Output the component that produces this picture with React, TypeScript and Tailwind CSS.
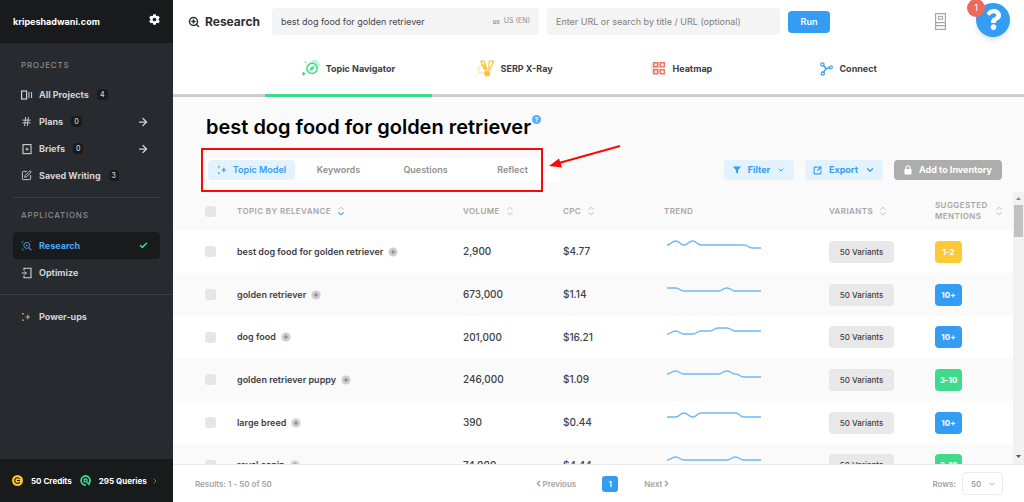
import React, { useState } from "react";
import { FaQuestion } from "react-icons/fa";
import {
  ArrowRight,
  Check,
  ChevronDown,
  ChevronLeft,
  ChevronRight,
  Hash,
  SquareArrowOutUpRight,
  SquarePen,
  ZoomIn,
} from "lucide-react";
import { IoMdSettings } from "react-icons/io";

type Topic = {
  name: string;
  volume: string;
  cpc: string;
  trend: number[];
  mentions: string;
  color: string;
};

const topics: Topic[] = [
  {
    name: "best dog food for golden retriever",
    volume: "2,900",
    cpc: "$4.77",
    trend: [6, 2, 6, 2, 6, 6, 6, 6, 6, 6, 9, 9],
    mentions: "1-2",
    color: "bg-[#fdca35]",
  },
  {
    name: "golden retriever",
    volume: "673,000",
    cpc: "$1.14",
    trend: [6, 6, 9, 9, 9, 9, 9, 6, 9, 9, 9, 9],
    mentions: "10+",
    color: "bg-[#349df3]",
  },
  {
    name: "dog food",
    volume: "201,000",
    cpc: "$16.21",
    trend: [10, 7, 10, 10, 7, 7, 4, 4, 7, 7, 7, 7],
    mentions: "10+",
    color: "bg-[#349df3]",
  },
  {
    name: "golden retriever puppy",
    volume: "246,000",
    cpc: "$1.09",
    trend: [7, 4, 7, 7, 7, 7, 7, 4, 7, 10, 10, 10],
    mentions: "3-10",
    color: "bg-[#3fdb8b]",
  },
  {
    name: "large breed",
    volume: "390",
    cpc: "$0.44",
    trend: [7, 7, 3, 7, 3, 3, 3, 3, 3, 7, 7, 7],
    mentions: "10+",
    color: "bg-[#349df3]",
  },
  {
    name: "royal canin",
    volume: "74,000",
    cpc: "$4.44",
    trend: [8, 5, 8, 8, 8, 8, 8, 8, 5, 8, 8, 8],
    mentions: "3-10",
    color: "bg-[#3fdb8b]",
  },
];

const ProjectsIcon = () => (
  <svg width="12" height="12" viewBox="0 0 12 12" fill="none" stroke="currentColor">
    <rect x="0.6" y="2" width="5" height="8" strokeWidth="1.2" />
    <path d="M8 3v6M10.6 3v6" strokeWidth="1" />
  </svg>
);

const BriefIcon = () => (
  <svg width="12" height="12" viewBox="0 0 12 12" fill="none" stroke="currentColor">
    <rect x="2" y="1.6" width="8" height="9" strokeWidth="1.1" />
    <path d="M6 4.6v3M4.5 6.1h3" strokeWidth="1" />
  </svg>
);

const OptimizeIcon = () => (
  <svg width="12" height="12" viewBox="0 0 12 12" fill="none" stroke="currentColor">
    <path d="M3 3.6V1.2h7v9.6H3V8.4" strokeWidth="1.1" />
    <path d="M0.8 6h4.4M3.8 4.4 5.4 6 3.8 7.6" strokeWidth="1" />
  </svg>
);

const ResearchIcon = () => (
  <svg width="12" height="12" viewBox="0 0 12 12" fill="none" stroke="#4d8fd1">
    <circle cx="5.8" cy="5.4" r="3" strokeWidth="1" />
    <circle cx="5.8" cy="5.4" r="0.9" fill="#4d8fd1" stroke="none" />
    <path d="m8 7.8 2.4 2.6" strokeWidth="1.1" />
    <path d="M1.4 3.4V1.4h1.4M1.4 8v2.2h2M9 1.6h1.2" strokeWidth="0.8" opacity="0.7" />
  </svg>
);

const SparkIcon = ({ className }: { className?: string }) => (
  <svg
    width="10"
    height="10"
    viewBox="0 0 10 10"
    className={className}
    fill="none"
    stroke="currentColor"
  >
    <path d="M6.8 2.8v4.4M4.6 5H9" strokeWidth="1.2" />
    <path d="M1.9 1v1.6M1.1 1.8h1.6M1.9 7.4V9M1.1 8.2h1.6" strokeWidth="1" />
  </svg>
);

const NavigatorIcon = () => (
  <svg width="18" height="17" viewBox="0 0 18 17" fill="none">
    <circle cx="12.6" cy="5" r="4.4" fill="#c9f5df" stroke="#6be3a7" strokeDasharray="1 1" />
    <circle cx="10" cy="8.4" r="5.1" fill="#e9fbf2" stroke="#3fdb8b" strokeWidth="1.5" />
    <path d="m12.6 5.8-1.5 3.7-3.7 1.6 1.5-3.8z" fill="#3fdb8b" />
    <path d="M1.6 12v3.6M0 13.8h3.4" stroke="#3fdb8b" strokeWidth="1.4" />
    <path d="M3.4 1v2M2.4 2h2" stroke="#8aebbb" strokeWidth="0.9" />
  </svg>
);

const XRayIcon = () => (
  <svg width="17" height="17" viewBox="0 0 17 17" fill="none">
    <circle cx="4.4" cy="9.4" r="3.8" stroke="#fbdc83" strokeWidth="2" strokeDasharray="1 1" />
    <path
      d="M2.6 1.2h3.2l3.4 8M6 1.2 7.4 10M2.6 1.2 7 10.4M11 1.2h4.6l-4 9M11 1.2v6l-1 3"
      stroke="#fcc52e"
      strokeWidth="1.2"
    />
    <circle cx="9.2" cy="13.4" r="3" fill="#fcc52e" />
  </svg>
);

const HeatmapIcon = () => (
  <svg width="15" height="15" viewBox="0 0 15 15" fill="none">
    <path d="M0 2h9v10H0z" fill="#fbe3dc" />
    <path
      d="M2.7 1.7h4v4h-4zM9.3 1.7h4v4h-4zM2.7 8.7h4v4h-4zM9.3 8.7h4v4h-4z"
      stroke="#ec7261"
      strokeWidth="1.5"
    />
  </svg>
);

const ConnectIcon = () => (
  <svg width="13" height="14" viewBox="0 0 13 14" fill="none" stroke="#41a3f4">
    <circle cx="2.4" cy="2.4" r="1.6" strokeWidth="1.3" />
    <circle cx="2.8" cy="11.6" r="1.6" strokeWidth="1.3" />
    <circle cx="10.8" cy="5.4" r="1.5" strokeWidth="1.3" />
    <path d="m3.6 3.6 2.6 3.2 3-1M6.2 6.8l-2.8 3.4" strokeWidth="1.6" />
  </svg>
);

const DocsIcon = () => (
  <svg width="11" height="17" viewBox="0 0 11 17" fill="none" stroke="#a9a5a3">
    <rect x="0.6" y="0.6" width="9.8" height="15.8" strokeWidth="1.2" />
    <rect x="3.4" y="3.4" width="4.2" height="2.8" strokeWidth="1.1" />
    <path d="M0.6 9.6h9.8M0.6 12.6h9.8" strokeWidth="1.2" />
  </svg>
);

const LockIcon = () => (
  <svg width="8" height="10" viewBox="0 0 8 10" fill="none">
    <rect x="0.4" y="4" width="7.2" height="5.4" rx="0.8" fill="currentColor" />
    <path d="M2 4.4V2.8a2 2 0 0 1 4 0v1.6" stroke="currentColor" strokeWidth="1.2" />
  </svg>
);

const CreditsIcon = () => (
  <svg width="11" height="11" viewBox="0 0 11 11" fill="none">
    <circle cx="5.5" cy="5.5" r="5.5" fill="#fcc52e" />
    <path d="M7.8 3.8a2.8 2.8 0 1 0 0 3.4M5 5.5h3" stroke="#181a1b" strokeWidth="1.1" />
  </svg>
);

const QueriesIcon = () => (
  <svg width="11" height="11" viewBox="0 0 12 12" fill="none" stroke="#3fdb8b">
    <path d="M9.6 9.4A4.9 4.9 0 1 0 6.4 10.9" strokeWidth="1.9" />
    <circle cx="6" cy="6" r="1.7" strokeWidth="1.5" />
    <path d="m7.6 7.8 2.8 3" strokeWidth="1.6" />
  </svg>
);

const SortIcon = ({ active = false }: { active?: boolean }) => (
  <svg width="8" height="10" viewBox="0 0 8 10" fill="none" strokeWidth="1.1">
    <path d="M1.4 3.6 4 1.2l2.6 2.4" stroke="#d0d0d0" />
    <path d="M1.4 6.4 4 8.8l2.6-2.4" stroke={active ? "#349df3" : "#d0d0d0"} />
  </svg>
);

const TrendLine = ({ values }: { values: number[] }) => {
  const step = 94 / (values.length - 1);
  const path = values.reduce((d, y, i) => {
    const x = i * step + 1;
    if (i === 0) return `M${x} ${y}`;
    const mid = x - step / 2;
    return `${d}C${mid} ${values[i - 1]} ${mid} ${y} ${x} ${y}`;
  }, "");

  return (
    <svg width="98" height="26" viewBox="-2 0 98 26" className="block" fill="none">
      <path d={path} stroke="#6db9f8" strokeWidth="1.5" />
    </svg>
  );
};

const NavItem = ({
  icon,
  label,
  count,
  arrow,
  active,
}: {
  icon: React.ReactNode;
  label: string;
  count?: number;
  arrow?: boolean;
  active?: boolean;
}) => (
  <a
    href="#"
    className={`flex h-[27px] items-center rounded px-2 text-[9px] font-bold ${
      active ? "bg-[#181a1b] text-[#4aa8f7]" : "text-[#d2d3d4]"
    }`}
  >
    <span className="flex w-[18px] shrink-0 items-center">{icon}</span>
    {label}
    {count !== undefined && (
      <span className="ml-2 rounded-sm bg-[#181a1b] px-[3px] text-[7px] leading-[11px] font-medium">
        {count}
      </span>
    )}
    {arrow && <ArrowRight size={12} strokeWidth={2.5} className="mr-[3px] ml-auto" />}
    {active && (
      <Check size={9} strokeWidth={4} className="mr-1 ml-auto text-[#3fdb8b]" />
    )}
  </a>
);

const Sidebar = () => (
  <aside className="flex w-[173px] shrink-0 flex-col bg-[#272a2e]">
    <div className="flex h-[43px] shrink-0 items-center justify-between bg-[#181a1b] pr-3 pl-[13px] text-[9px] font-bold text-white">
      kripeshadwani.com
      <button aria-label="Settings" className="mb-1">
        <IoMdSettings size={13} />
      </button>
    </div>
    <nav className="flex-1">
      <div className="px-[13px] pt-4">
        <h2 className="mb-[10px] px-2 text-[8px] leading-3 font-medium tracking-widest text-[#8b8d90]">
          PROJECTS
        </h2>
        <NavItem icon={<ProjectsIcon />} label="All Projects" count={4} />
        <NavItem icon={<Hash size={11} />} label="Plans" count={0} arrow />
        <NavItem icon={<BriefIcon />} label="Briefs" count={0} arrow />
        <NavItem icon={<SquarePen size={11} />} label="Saved Writing" count={3} />
        <hr className="mt-2 border-[#3b3e43]" />
        <h2 className="mt-[11px] mb-[11px] px-2 text-[8px] leading-3 font-medium tracking-widest text-[#8b8d90]">
          APPLICATIONS
        </h2>
        <NavItem icon={<ResearchIcon />} label="Research" active />
        <NavItem icon={<OptimizeIcon />} label="Optimize" />
      </div>
      <hr className="mt-2 mb-2 border-[#3b3e43]" />
      <div className="px-[13px]">
        <NavItem icon={<SparkIcon className="text-[#d3a57c]" />} label="Power-ups" />
      </div>
    </nav>
    <button className="flex h-[43px] shrink-0 items-center gap-2 bg-[#181a1b] px-3 text-[8px] font-bold whitespace-nowrap text-white">
      <CreditsIcon />
      50 Credits
      <QueriesIcon />
      295 Queries
      <ChevronRight size={8} className="-ml-1 text-[#a5a5a5]" />
    </button>
  </aside>
);

const Topbar = () => (
  <header className="flex h-[43px] shrink-0 items-center gap-2 bg-white pl-[15px]">
    <h1 className="mr-1 flex w-[72px] items-center gap-[5px] text-xs font-bold text-[#2b2e33]">
      <ZoomIn size={12} strokeWidth={3} className="shrink-0" />
      Research
    </h1>
    <div className="flex h-[27px] w-[267px] items-center rounded-sm bg-[#f4f4f4] px-[9px] text-[#8f8f8f]">
      <input
        aria-label="Keyword"
        defaultValue="best dog food for golden retriever"
        className="min-w-0 flex-1 text-[9px] text-[#45484c] outline-none"
      />
      <span className="text-[6px] font-semibold">us</span>
      <span className="ml-1 text-[7px]">US (EN)</span>
    </div>
    <input
      aria-label="URL"
      placeholder="Enter URL or search by title / URL (optional)"
      className="h-[27px] w-[233px] rounded-sm bg-[#f4f4f4] px-[9px] text-[9px] outline-none placeholder:text-[#808080]"
    />
    <button className="h-[22px] w-[42px] rounded-sm bg-[#349df3] text-[9px] font-semibold text-white">
      Run
    </button>
    <div className="ml-auto flex items-center gap-[30px] pr-[14px]">
      <button aria-label="Docs">
        <DocsIcon />
      </button>
      <button
        aria-label="Help"
        className="relative mb-1 flex h-[34px] w-[34px] items-center justify-center rounded-full bg-[#349df3] text-white shadow-md"
      >
        <FaQuestion size={21} />
        <span className="absolute -top-1 -left-[9px] h-[18px] w-[18px] rounded-full bg-[#ec6a5c] text-[9px] leading-[18px]">
          1
        </span>
      </button>
    </div>
  </header>
);

const views = [
  { label: "Topic Navigator", icon: <NavigatorIcon /> },
  { label: "SERP X-Ray", icon: <XRayIcon /> },
  { label: "Heatmap", icon: <HeatmapIcon /> },
  { label: "Connect", icon: <ConnectIcon /> },
];

const ViewTabs = () => (
  <div className="grid h-[54px] shrink-0 grid-cols-4 border-b-3 border-[#cecece] bg-white px-[92px]">
    {views.map((view, i) => (
      <button
        key={view.label}
        className={`-mb-[3px] flex items-center justify-center gap-[6px] border-b-3 text-[9px] font-bold text-[#3d4045] ${
          i === 0 ? "border-[#3fdb8b]" : "border-transparent"
        }`}
      >
        {view.icon}
        {view.label}
      </button>
    ))}
  </div>
);

const models = ["Topic Model", "Keywords", "Questions", "Reflect"];

const Toolbar = () => {
  const [selected, setSelected] = useState("Topic Model");

  return (
    <div className="flex items-center gap-[11px] pr-[22px] pl-[33px]">
      <div className="relative mr-auto flex rounded bg-white p-[2px] pr-1">
        {models.map((model) => (
          <button
            key={model}
            onClick={() => setSelected(model)}
            className={`flex h-5 w-[87px] items-center justify-center gap-[6px] rounded text-[9px] font-semibold ${
              selected === model
                ? "bg-[#e2f2ff] text-[#349df3]"
                : "text-[#8f8f8f]"
            }`}
          >
            {model === "Topic Model" && <SparkIcon />}
            {model}
          </button>
        ))}
        <div className="pointer-events-none absolute -top-[10px] right-[17px] -bottom-[10px] -left-[5px] border-2 border-[#fb0808]" />
        <svg
          width="76"
          height="30"
          viewBox="0 0 76 30"
          className="pointer-events-none absolute -top-[14px] left-full -ml-[13px]"
        >
          <path d="M73 2 12 19" stroke="#fb0808" strokeWidth="2" />
          <path d="M2 22 12 14.4 15 23.4z" fill="#fb0808" />
        </svg>
      </div>
      <button className="flex h-5 w-[70px] items-center justify-center gap-[7px] rounded bg-[#e2f2ff] text-[9px] font-bold text-[#349df3]">
        <svg width="8" height="8" viewBox="0 0 8 8" fill="currentColor">
          <path d="M0 0.4h8L5 4.2v3.4L3 6.6V4.2z" />
        </svg>
        Filter
        <ChevronDown size={8} strokeWidth={3} />
      </button>
      <button className="flex h-5 w-[78px] items-center justify-center gap-[7px] rounded bg-[#e2f2ff] text-[9px] font-bold text-[#349df3]">
        <SquareArrowOutUpRight size={9} strokeWidth={3} />
        Export
        <ChevronDown size={10} strokeWidth={3} />
      </button>
      <button className="flex h-5 w-[108px] items-center justify-center gap-[7px] rounded bg-[#adadad] text-[9px] font-bold text-white">
        <LockIcon />
        Add to Inventory
      </button>
    </div>
  );
};

const Tick = ({ label }: { label: string }) => (
  <input
    type="checkbox"
    aria-label={label}
    className="block h-[11px] w-[11px] appearance-none rounded-[3px] bg-[#e6e6e6] checked:bg-[#349df3]"
  />
);

const columns = [
  { label: "TOPIC BY RELEVANCE", width: "", sort: true },
  { label: "VOLUME", width: "w-[100px]", sort: true },
  { label: "CPC", width: "w-[101px]", sort: true },
  { label: "TREND", width: "w-[165px]", sort: false },
  { label: "VARIANTS", width: "w-[106px]", sort: true },
  { label: "SUGGESTED MENTIONS", width: "w-[78px] pr-[10px]", sort: true },
];

const TopicTable = () => (
  <table className="w-full table-fixed border-collapse text-left text-[10px] font-medium text-[#3d4045]">
    <thead>
      <tr className="h-[38px] text-[8px] leading-[11px] tracking-wider text-[#a6a6a6]">
        <th className="w-16 pl-8">
          <Tick label="Select all topics" />
        </th>
        {columns.map((column, i) => (
          <th key={column.label} className={`font-semibold ${column.width}`}>
            <span className="flex items-center gap-[6px]">
              {column.label}
              {column.sort && (
                <span className="shrink-0">
                  <SortIcon active={i === 0} />
                </span>
              )}
            </span>
          </th>
        ))}
      </tr>
    </thead>
    <tbody>
      {topics.map((topic) => (
        <tr
          key={topic.name}
          className="h-[43px] odd:bg-white even:bg-[#fafafa] nth-[3n]:h-[42px]"
        >
          <td className="pl-8">
            <Tick label={topic.name} />
          </td>
          <td className="text-[9px] font-semibold">
            <span className="flex items-center gap-[5px]">
              {topic.name}
              <button aria-label={`Add ${topic.name}`}>
                <svg width="10" height="10" viewBox="0 0 10 10" className="block">
                  <circle cx="5" cy="5" r="4.6" fill="#d0d0d0" />
                  <path d="M5 2.8v4.4M2.8 5h4.4" stroke="#7d7d7d" />
                </svg>
              </button>
            </span>
          </td>
          <td>{topic.volume}</td>
          <td>{topic.cpc}</td>
          <td>
            <TrendLine values={topic.trend} />
          </td>
          <td>
            <button className="block h-[22px] w-[65px] rounded bg-[#e8e8e8] text-[8px]">
              50 Variants
            </button>
          </td>
          <td>
            <span
              className={`block h-[22px] w-[27px] rounded text-center text-[8px] leading-[22px] font-bold text-white ${topic.color}`}
            >
              {topic.mentions}
            </span>
          </td>
        </tr>
      ))}
    </tbody>
  </table>
);

const Scrollbar = () => (
  <div className="flex w-[11px] shrink-0 flex-col items-center justify-between bg-[#f1f1f1] py-1">
    <div className="flex w-full flex-col items-center gap-1">
      <svg width="5" height="3" viewBox="0 0 5 3" className="my-px">
        <path d="M0 3 2.5 0 5 3z" fill="#8c8c8c" />
      </svg>
      <div className="h-8 w-[9px] bg-[#c1c1c1]" />
    </div>
    <svg width="5" height="3" viewBox="0 0 5 3" className="mb-[2px]">
      <path d="M0 0h5L2.5 3z" fill="#505050" />
    </svg>
  </div>
);

const Pagination = () => (
  <footer className="grid h-[38px] shrink-0 grid-cols-3 items-center border-t border-[#e8e8e8] bg-white pr-[21px] pl-[22px] text-[8px] font-semibold text-[#a3a3a3]">
    <span>Results: 1 - 50 of 50</span>
    <div className="flex items-center justify-center gap-[26px] pl-[7px]">
      <button className="flex items-center">
        <ChevronLeft size={9} strokeWidth={4} />
        Previous
      </button>
      <button className="h-4 w-4 rounded-[3px] bg-[#349df3] text-white">1</button>
      <button className="flex items-center">
        Next
        <ChevronRight size={9} strokeWidth={4} />
      </button>
    </div>
    <label className="flex items-center justify-end gap-[6px]">
      Rows:
      <span className="relative">
        <select className="block h-[23px] w-[41px] appearance-none rounded border border-[#ebebeb] bg-white pl-2">
          <option>50</option>
        </select>
        <ChevronDown
          size={8}
          strokeWidth={2.5}
          className="pointer-events-none absolute top-2 right-[7px]"
        />
      </span>
    </label>
  </footer>
);

const App = () => {
  return (
    <div className="flex h-screen overflow-hidden bg-[#fafafa] font-['Inter',sans-serif]">
      <Sidebar />
      <main className="flex min-w-0 flex-1 flex-col">
        <Topbar />
        <ViewTabs />
        <div className="flex items-start gap-px pt-[15px] pr-8 pb-4 pl-[33px]">
          <h2 className="text-[20px] leading-[30px] font-semibold text-black">
            best dog food for golden retriever
          </h2>
          <button
            aria-label="About this topic"
            className="mt-[3px] flex h-[9px] w-[9px] items-center justify-center rounded-full bg-[#5aaef5] text-white"
          >
            <FaQuestion size={5} />
          </button>
        </div>
        <Toolbar />
        <div className="mt-[10px] flex min-h-0 flex-1">
          <div className="min-w-0 flex-1 overflow-hidden">
            <TopicTable />
          </div>
          <Scrollbar />
        </div>
        <Pagination />
      </main>
    </div>
  );
};

export default App;
